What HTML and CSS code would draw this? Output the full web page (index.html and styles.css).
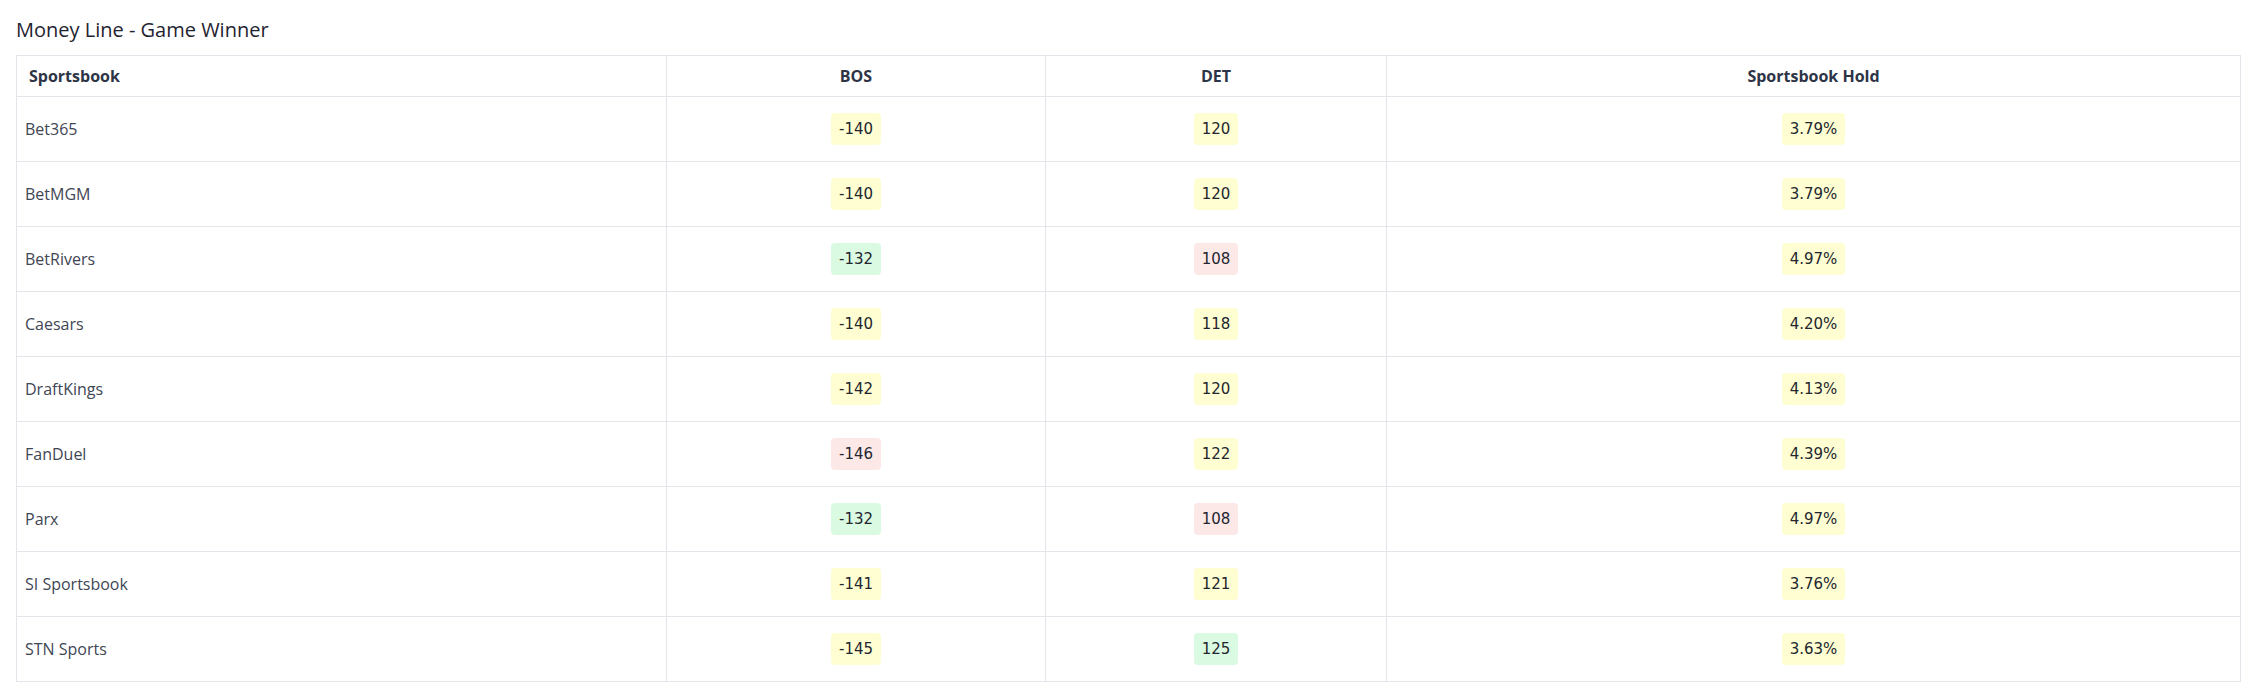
FILE: index.html
```html
<!DOCTYPE html>
<html lang="en">
<head>
  <meta charset="UTF-8">
  <meta name="viewport" content="width=device-width, initial-scale=1.0">
  <title>Money Line - Game Winner</title>
  <link rel="stylesheet" href="styles.css">
</head>
<body>
  <h2 class="market-title">Money Line - Game Winner</h2>
  <table class="odds-table">
    <colgroup>
      <col class="col-book">
      <col class="col-team">
      <col class="col-team2">
      <col class="col-hold">
    </colgroup>
    <thead>
      <tr>
        <th class="book-head">Sportsbook</th>
        <th>BOS</th>
        <th>DET</th>
        <th>Sportsbook Hold</th>
      </tr>
    </thead>
    <tbody>
      <tr>
        <td class="book">Bet365</td>
        <td><span class="odds avg">-140</span></td>
        <td><span class="odds avg">120</span></td>
        <td><span class="odds avg">3.79%</span></td>
      </tr>
      <tr>
        <td class="book">BetMGM</td>
        <td><span class="odds avg">-140</span></td>
        <td><span class="odds avg">120</span></td>
        <td><span class="odds avg">3.79%</span></td>
      </tr>
      <tr>
        <td class="book">BetRivers</td>
        <td><span class="odds best">-132</span></td>
        <td><span class="odds worst">108</span></td>
        <td><span class="odds avg">4.97%</span></td>
      </tr>
      <tr>
        <td class="book">Caesars</td>
        <td><span class="odds avg">-140</span></td>
        <td><span class="odds avg">118</span></td>
        <td><span class="odds avg">4.20%</span></td>
      </tr>
      <tr>
        <td class="book">DraftKings</td>
        <td><span class="odds avg">-142</span></td>
        <td><span class="odds avg">120</span></td>
        <td><span class="odds avg">4.13%</span></td>
      </tr>
      <tr>
        <td class="book">FanDuel</td>
        <td><span class="odds worst">-146</span></td>
        <td><span class="odds avg">122</span></td>
        <td><span class="odds avg">4.39%</span></td>
      </tr>
      <tr>
        <td class="book">Parx</td>
        <td><span class="odds best">-132</span></td>
        <td><span class="odds worst">108</span></td>
        <td><span class="odds avg">4.97%</span></td>
      </tr>
      <tr>
        <td class="book">SI Sportsbook</td>
        <td><span class="odds avg">-141</span></td>
        <td><span class="odds avg">121</span></td>
        <td><span class="odds avg">3.76%</span></td>
      </tr>
      <tr>
        <td class="book">STN Sports</td>
        <td><span class="odds avg">-145</span></td>
        <td><span class="odds best">125</span></td>
        <td><span class="odds avg">3.63%</span></td>
      </tr>
    </tbody>
  </table>
</body>
</html>
```

FILE: styles.css
```css
body {
  margin: 16px 16px 12px;
  background: #ffffff;
  color: #3f4654;
  font-family: "Open Sans", sans-serif;
}
.market-title {
  margin: 0 0 11px 0;
  font-size: 20px;
  line-height: 28px;
  font-weight: 400;
  color: #1f2430;
}
.odds-table {
  width: 100%;
  table-layout: fixed;
  border-collapse: collapse;
  border: 1px solid #e3e5eb;
}
.col-book {
  width: 650px;
}
.col-team {
  width: 379px;
}
.col-team2 {
  width: 341px;
}
.odds-table th {
  height: 40px;
  padding: 0 12px;
  font-size: 16px;
  font-weight: 700;
  color: #2d3446;
  text-align: center;
  border: 1px solid #e3e5eb;
}
.odds-table th.book-head {
  text-align: left;
}
.odds-table td {
  height: 64px;
  padding: 0 8px;
  font-size: 16px;
  text-align: center;
  border: 1px solid #e3e5eb;
}
.odds-table td.book {
  text-align: left;
}
.odds {
  display: inline-block;
  padding: 0 8px;
  line-height: 32px;
  border-radius: 4px;
  font-family: "DejaVu Sans", sans-serif;
  font-size: 15px;
  color: #23262e;
}
.odds.avg {
  background: #fefed2;
}
.odds.best {
  background: #dbfae2;
}
.odds.worst {
  background: #fde8e8;
}
```
